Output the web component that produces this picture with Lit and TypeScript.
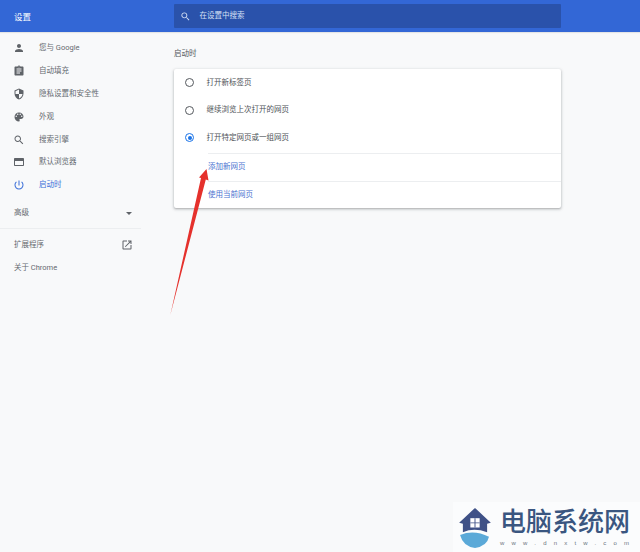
import { LitElement, html, css } from "lit";
import { customElement } from "lit/decorators.js";

const P: Record<string, string> = {
  person: "M12 12c2.21 0 4-1.79 4-4s-1.79-4-4-4-4 1.79-4 4 1.79 4 4 4zm0 2c-2.67 0-8 1.34-8 4v2h16v-2c0-2.66-5.33-4-8-4z",
  assignment: "M19 3h-4.18C14.4 1.84 13.3 1 12 1c-1.3 0-2.4.84-2.82 2H5c-1.1 0-2 .9-2 2v14c0 1.1.9 2 2 2h14c1.1 0 2-.9 2-2V5c0-1.1-.9-2-2-2zm-7 0c.55 0 1 .45 1 1s-.45 1-1 1-1-.45-1-1 .45-1 1-1zm2 14H7v-2h7v2zm3-4H7v-2h10v2zm0-4H7V7h10v2z",
  security: "M12 1L3 5v6c0 5.55 3.84 10.74 9 12 5.16-1.26 9-6.45 9-12V5l-9-4zm0 10.99h7c-.53 4.12-3.28 7.79-7 8.94V12H5V6.3l7-3.11v8.8z",
  palette: "M12 3c-4.97 0-9 4.03-9 9s4.03 9 9 9c.83 0 1.5-.67 1.5-1.5 0-.39-.15-.74-.39-1.01-.23-.26-.38-.61-.38-.99 0-.83.67-1.5 1.5-1.5H16c2.76 0 5-2.24 5-5 0-4.42-4.03-8-9-8zm-5.5 9c-.83 0-1.5-.67-1.5-1.5S5.67 9 6.5 9 8 9.67 8 10.5 7.33 12 6.5 12zm3-4C8.67 8 8 7.33 8 6.5S8.67 5 9.5 5s1.5.67 1.5 1.5S10.33 8 9.5 8zm5 0c-.83 0-1.5-.67-1.5-1.5S13.67 5 14.5 5s1.5.67 1.5 1.5S15.33 8 14.5 8zm3 4c-.83 0-1.5-.67-1.5-1.5S16.67 9 17.5 9s1.5.67 1.5 1.5-.67 1.5-1.5 1.5z",
  search: "M15.5 14h-.79l-.28-.27C15.41 12.59 16 11.11 16 9.5 16 5.91 13.09 3 9.5 3S3 5.91 3 9.5 5.91 16 9.5 16c1.61 0 3.09-.59 4.23-1.57l.27.28v.79l5 4.99L20.49 19l-4.99-5zm-6 0C7.01 14 5 11.99 5 9.5S7.01 5 9.5 5 14 7.01 14 9.5 11.99 14 9.5 14z",
  web: "M20 4H4c-1.1 0-2 .9-2 2v12c0 1.1.9 2 2 2h16c1.1 0 2-.9 2-2V6c0-1.1-.9-2-2-2zm0 14H4v-8h16v8z",
  power: "M13 3h-2v10h2V3zm4.83 2.17l-1.42 1.42C17.99 7.86 19 9.81 19 12c0 3.87-3.13 7-7 7s-7-3.13-7-7c0-2.19 1.01-4.14 2.58-5.42L6.17 5.17C4.23 6.82 3 9.26 3 12c0 4.97 4.03 9 9 9s9-4.03 9-9c0-2.74-1.23-5.18-3.17-6.83z",
  open: "M19 19H5V5h7V3H5c-1.11 0-2 .9-2 2v14c0 1.1.89 2 2 2h14c1.1 0 2-.9 2-2v-7h-2v7zM14 3v2h3.59l-9.83 9.83 1.41 1.41L19 6.41V10h2V3h-7z",
};
const icon = (n: string) => html`<svg class="ic" viewBox="0 0 24 24"><path d=${P[n]}></path></svg>`;

const NAV = [
  ["person", "您与 Google"],
  ["assignment", "自动填充"],
  ["security", "隐私设置和安全性"],
  ["palette", "外观"],
  ["search", "搜索引擎"],
  ["web", "默认浏览器"],
  ["power", "启动时"],
];

@customElement("app-root")
export class AppRoot extends LitElement {
  static styles = css`
    :host {
      display: block;
      position: relative;
      width: 640px;
      height: 552px;
      overflow: hidden;
      background: #f8f9fa;
      color: #666a70;
      font: 7.5px/10px Roboto, "Noto Sans CJK SC", sans-serif;
    }
    .ic { width: 12px; height: 12px; fill: #5f6368; flex: none; display: block; }
    header { height: 32px; background: #3367d6; display: flex; align-items: center; box-shadow: 0 1px 1px rgba(0,0,0,.08); }
    .title { width: 174px; padding: 2px 0 0 14px; box-sizing: border-box; color: #fff; font-size: 8.5px; }
    .search { width: 387px; height: 24px; background: #2a52ab; border-radius: 1px; display: flex; align-items: center; gap: 8.5px; padding-left: 6px; box-sizing: border-box; color: #d5e0f5; }
    .search .ic { fill: #d5e0f5; width: 11px; height: 11px; }
    .layout { display: flex; }
    nav { width: 141px; padding-top: 5px; flex: none; }
    .item { height: 22.8px; display: flex; align-items: center; gap: 14px; padding-left: 13px; }
    .item.on { color: #3b6fd8; }
    .item.on .ic { fill: #3b6fd8; }
    .adv { margin-top: 5.6px; height: 22px; display: flex; align-items: center; justify-content: space-between; padding: 0 9px 0 14px; }
    .caret { width: 0; height: 0; border: 3px solid transparent; border-top: 3px solid #5f6368; border-bottom: 0; }
    .rule { height: 1px; background: #eceef0; margin-top: 4px; }
    .plain { height: 23px; display: flex; align-items: center; justify-content: space-between; padding: 0 8px 0 14px; }
    .ext { margin-top: 4px; }
    main { margin-left: 33px; width: 387px; }
    h2 { margin: 0; height: 37px; padding-top: 17px; box-sizing: border-box; font-size: 7.5px; line-height: 10px; font-weight: 400; color: #53575c; }
    .card { background: #fff; border-radius: 2px; height: 139px; box-shadow: 0 1px 2px rgba(60,64,67,.3), 0 1px 3px 1px rgba(60,64,67,.12); display: flex; flex-direction: column; }
    .opt { height: 27.5px; display: flex; align-items: center; gap: 12.5px; padding-left: 11px; color: #4d5156; }
    .radio { width: 7px; height: 7px; border: 1.4px solid #55595e; border-radius: 50%; flex: none; display: flex; align-items: center; justify-content: center; }
    .radio.on { border-color: #1a73e8; }
    .radio.on::after { content: ""; width: 4px; height: 4px; border-radius: 50%; background: #1a73e8; }
    .links { margin-top: 1.5px; flex: 1; display: flex; flex-direction: column; }
    .link { margin-left: 34px; height: 28px; padding-bottom: 1px; border-top: 1px solid #eceef0; display: flex; align-items: center; color: #4a72d0; box-sizing: border-box; }
    .link + .link { height: 27px; padding-bottom: 0; }
    .arrow { position: absolute; left: 160px; top: 160px; width: 60px; height: 165px; }
    .mark { position: absolute; left: 453px; top: 502px; width: 187px; height: 50px; background: #fbfcfd; display: flex; gap: 7px; padding: 5px 0 0 4px; box-sizing: border-box; }
    .mark svg { width: 36px; height: 41px; flex: none; }
    .mtext { display: flex; flex-direction: column; }
    .mname { font: 500 26px/26px "Noto Sans CJK SC", sans-serif; color: #3a5680; white-space: nowrap; }
    .murl { margin-top: 5px; font: 6px/10px "Liberation Sans", sans-serif; letter-spacing: 7.2px; color: #6b7580; white-space: nowrap; }
  `;

  render() {
    return html`
      <header>
        <div class="title">设置</div>
        <div class="search">${icon("search")}<span>在设置中搜索</span></div>
      </header>
      <div class="layout">
        <nav>
          ${NAV.map(([i, t], k) => html`<div class="item ${k === 6 ? "on" : ""}">${icon(i)}<span>${t}</span></div>`)}
          <div class="adv"><span>高级</span><span class="caret"></span></div>
          <div class="rule"></div>
          <div class="plain ext"><span>扩展程序</span>${icon("open")}</div>
          <div class="plain"><span>关于 Chrome</span></div>
        </nav>
        <main>
          <h2>启动时</h2>
          <div class="card">
            <div class="opt"><span class="radio"></span>打开新标签页</div>
            <div class="opt"><span class="radio"></span>继续浏览上次打开的网页</div>
            <div class="opt"><span class="radio on"></span>打开特定网页或一组网页</div>
            <div class="links">
              <div class="link">添加新网页</div>
              <div class="link">使用当前网页</div>
            </div>
          </div>
        </main>
      </div>
      <svg class="arrow" viewBox="160 160 60 165">
        <path d="M170.3 315 L201 178 L199 177.5 L206.5 169 L208.5 180.5 L205.8 179.5 Z" fill="#e5312c"></path>
      </svg>
      <div class="mark">
        <svg viewBox="0 0 38 44">
          <path d="M19 1 L36 17 L32 18 L32 27 Q18 22 6 27 L6 18 L2 17 Z" fill="#3f5187"></path>
          <rect x="14" y="12" width="10" height="10" fill="#fff"></rect>
          <path d="M18.5 12h1v10h-1zM14 16.5h10v1H14z" fill="#3f5187"></path>
          <path d="M3 30 Q18 24 34 32 Q32 42 19 44 Q6 42 3 30 Z" fill="#5ba9d8"></path>
        </svg>
        <div class="mtext">
          <div class="mname">电脑系统网</div>
          <div class="murl">www.dnxtw.com</div>
        </div>
      </div>
    `;
  }
}
